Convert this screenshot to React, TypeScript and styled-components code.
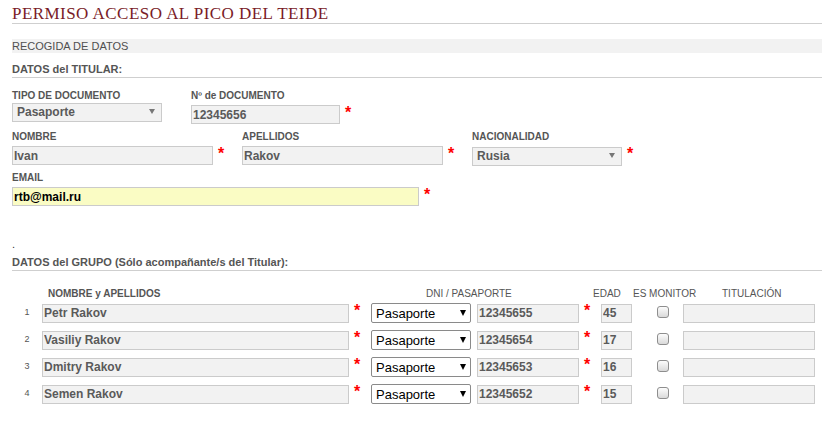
import React from "react"
import styled, { createGlobalStyle } from "styled-components"

const GlobalStyle = createGlobalStyle`
  body {
    margin: 0;
    background: #fff;
    font-family: "Liberation Sans", Arial, sans-serif;
  }
  * { box-sizing: border-box; }
`

type Member = { name: string; doc: string; age: string }

const members: Member[] = [
  { name: "Petr Rakov", doc: "12345655", age: "45" },
  { name: "Vasiliy Rakov", doc: "12345654", age: "17" },
  { name: "Dmitry Rakov", doc: "12345653", age: "16" },
  { name: "Semen Rakov", doc: "12345652", age: "15" },
]

export default function App() {
  return (
    <React.Fragment>
      <GlobalStyle />
      <Page>
        <Title>PERMISO ACCESO AL PICO DEL TEIDE</Title>
        <StepBar>RECOGIDA DE DATOS</StepBar>

        <SectionTitle $top={10}>DATOS del TITULAR:</SectionTitle>
        <Form>
          <FieldRow>
            <Field>
              <Label>TIPO DE DOCUMENTO</Label>
              <Control $offset={0}>
                <SelectBox $w={150}>
                  <PlainSelect defaultValue="Pasaporte">
                    <option>Pasaporte</option>
                    <option>DNI</option>
                  </PlainSelect>
                  <GreyArrow />
                </SelectBox>
                <Star $hidden>*</Star>
              </Control>
            </Field>
            <Field>
              <Label>Nº de DOCUMENTO</Label>
              <Control>
                <TextInput $w={149} defaultValue="12345656" />
                <Star>*</Star>
              </Control>
            </Field>
          </FieldRow>

          <FieldRow>
            <Field>
              <Label>NOMBRE</Label>
              <Control>
                <TextInput $w={201} defaultValue="Ivan" />
                <Star>*</Star>
              </Control>
            </Field>
            <Field>
              <Label>APELLIDOS</Label>
              <Control>
                <TextInput $w={201} defaultValue="Rakov" />
                <Star>*</Star>
              </Control>
            </Field>
            <Field>
              <Label>NACIONALIDAD</Label>
              <Control>
                <SelectBox $w={150}>
                  <PlainSelect defaultValue="Rusia">
                    <option>Rusia</option>
                    <option>España</option>
                  </PlainSelect>
                  <GreyArrow />
                </SelectBox>
                <Star>*</Star>
              </Control>
            </Field>
          </FieldRow>

          <FieldRow>
            <Field>
              <Label>EMAIL</Label>
              <Control>
                <TextInput $w={407} $focus defaultValue="rtb@mail.ru" />
                <Star>*</Star>
              </Control>
            </Field>
          </FieldRow>
        </Form>

        <DotLine>.</DotLine>

        <SectionTitle $top={5}>DATOS del GRUPO (Sólo acompañante/s del Titular):</SectionTitle>

        <GroupHead>
          <span />
          <HeadCell $bold>NOMBRE y APELLIDOS</HeadCell>
          <HeadCell>DNI / PASAPORTE</HeadCell>
          <HeadCell>EDAD</HeadCell>
          <HeadCell>ES MONITOR</HeadCell>
          <HeadCell>TITULACIÓN</HeadCell>
        </GroupHead>

        <GroupTable>
          {members.map((m, i) => (
            <GroupRow key={m.doc}>
              <RowNum>{i + 1}</RowNum>
              <TextInput $w={307} defaultValue={m.name} />
              <StarCell>*</StarCell>
              <DocSelectBox>
                <DocSelect defaultValue="Pasaporte">
                  <option>Pasaporte</option>
                  <option>DNI</option>
                </DocSelect>
                <BlackArrow />
              </DocSelectBox>
              <TextInput $w={102} defaultValue={m.doc} />
              <StarCell>*</StarCell>
              <TextInput $w={31} defaultValue={m.age} />
              <CheckCell>
                <Check type="checkbox" />
              </CheckCell>
              <TextInput $w={132} defaultValue="" />
            </GroupRow>
          ))}
        </GroupTable>
      </Page>
    </React.Fragment>
  )
}

const Page = styled.div`
  padding: 4px 0 0 12px;
  overflow: hidden;
`

const Title = styled.h1`
  margin: 0;
  font-family: "Liberation Serif", "Times New Roman", serif;
  font-weight: normal;
  font-size: 17px;
  line-height: 19px;
  letter-spacing: 0.45px;
  color: #7a1c28;
  border-bottom: 1px solid #cfcfcf;
`

const StepBar = styled.div`
  margin-top: 15px;
  height: 14px;
  line-height: 14px;
  background: #f2f2f2;
  font-size: 11px;
  color: #4f4f4f;
`

const SectionTitle = styled.h2<{ $top: number }>`
  margin: ${p => p.$top}px 0 0;
  font-size: 11px;
  line-height: 13px;
  font-weight: bold;
  color: #555;
  padding-bottom: 1px;
  border-bottom: 1px solid #cfcfcf;
`

const Form = styled.div`
  margin-top: 12px;
  display: flex;
  flex-direction: column;
  gap: 7px;
`

const FieldRow = styled.div`
  display: flex;
  gap: 17px;
`

const Field = styled.div`
  display: flex;
  flex-direction: column;
`

const Label = styled.label`
  font-size: 10px;
  line-height: 12px;
  font-weight: bold;
  color: #555;
`

const Control = styled.div<{ $offset?: number }>`
  display: flex;
  align-items: flex-start;
  margin-top: ${p => p.$offset ?? 3}px;
`

const Star = styled.span<{ $hidden?: boolean }>`
  width: 7px;
  margin-left: 5px;
  font-size: 16px;
  line-height: 16px;
  font-weight: bold;
  color: #f00;
  visibility: ${p => (p.$hidden ? "hidden" : "visible")};
`

const TextInput = styled.input<{ $w: number; $focus?: boolean }>`
  width: ${p => p.$w}px;
  height: 19px;
  margin: 0;
  padding: 0 1px;
  border: 1px solid #cbcbcb;
  border-radius: 0;
  background: ${p => (p.$focus ? "#fafcc4" : "#f2f2f2")};
  font-family: "Liberation Sans", Arial, sans-serif;
  font-size: 12px;
  font-weight: bold;
  color: ${p => (p.$focus ? "#000" : "#5a5a5a")};
  outline: none;
`

const SelectBox = styled.div<{ $w: number }>`
  position: relative;
  width: ${p => p.$w}px;
  height: 19px;
`

const PlainSelect = styled.select`
  appearance: none;
  width: 100%;
  height: 100%;
  margin: 0;
  padding: 0 0 0 4px;
  border: 1px solid #cbcbcb;
  border-radius: 0;
  background: #f2f2f2;
  font-family: "Liberation Sans", Arial, sans-serif;
  font-size: 12px;
  font-weight: bold;
  color: #5a5a5a;
  outline: none;
`

const GreyArrow = styled.span`
  position: absolute;
  right: 7px;
  top: 7px;
  width: 0;
  height: 0;
  border-left: 3px solid transparent;
  border-right: 3px solid transparent;
  border-top: 5px solid #777;
  pointer-events: none;
`

const DotLine = styled.p`
  margin: 32px 0 0;
  font-size: 11px;
  line-height: 13px;
  color: #333;
`

const GroupHead = styled.div`
  margin-top: 17px;
  display: grid;
  grid-template-columns: 36px 378px 167px 40px 89px auto;
  font-size: 10px;
  line-height: 12px;
  color: #555;
`

const HeadCell = styled.span<{ $bold?: boolean }>`
  font-weight: ${p => (p.$bold ? "bold" : "normal")};
  white-space: nowrap;
`

const GroupTable = styled.div`
  margin-top: 3px;
  display: flex;
  flex-direction: column;
  gap: 7px;
`

const GroupRow = styled.div`
  display: grid;
  grid-template-columns: 30px 307px 22px 106px 102px 22px 31px 51px 132px;
  height: 20px;
  align-items: center;
`

const RowNum = styled.span`
  text-align: center;
  font-size: 9px;
  line-height: 10px;
  color: #555;
  margin-top: -2px;
`

const StarCell = styled.span`
  align-self: start;
  padding-left: 5px;
  font-size: 16px;
  line-height: 16px;
  font-weight: bold;
  color: #f00;
`

const DocSelectBox = styled.div`
  position: relative;
  width: 100px;
  height: 20px;
`

const DocSelect = styled.select`
  appearance: none;
  width: 100%;
  height: 100%;
  margin: 0;
  padding: 0 0 0 4px;
  border: 1px solid #8a8a8a;
  border-radius: 2px;
  background: #fff;
  font-family: "Liberation Sans", Arial, sans-serif;
  font-size: 13px;
  color: #000;
  outline: none;
`

const BlackArrow = styled.span`
  position: absolute;
  right: 5px;
  top: 7px;
  width: 0;
  height: 0;
  border-left: 3.5px solid transparent;
  border-right: 3.5px solid transparent;
  border-top: 6px solid #000;
  pointer-events: none;
`

const CheckCell = styled.span`
  display: flex;
  align-self: start;
  padding: 3px 0 0 25px;
`

const Check = styled.input`
  appearance: none;
  width: 12px;
  height: 12px;
  margin: 0;
  border: 1px solid #8e8e8e;
  border-radius: 3px;
  background: linear-gradient(#fcfcfc, #d9d9d9);
`
